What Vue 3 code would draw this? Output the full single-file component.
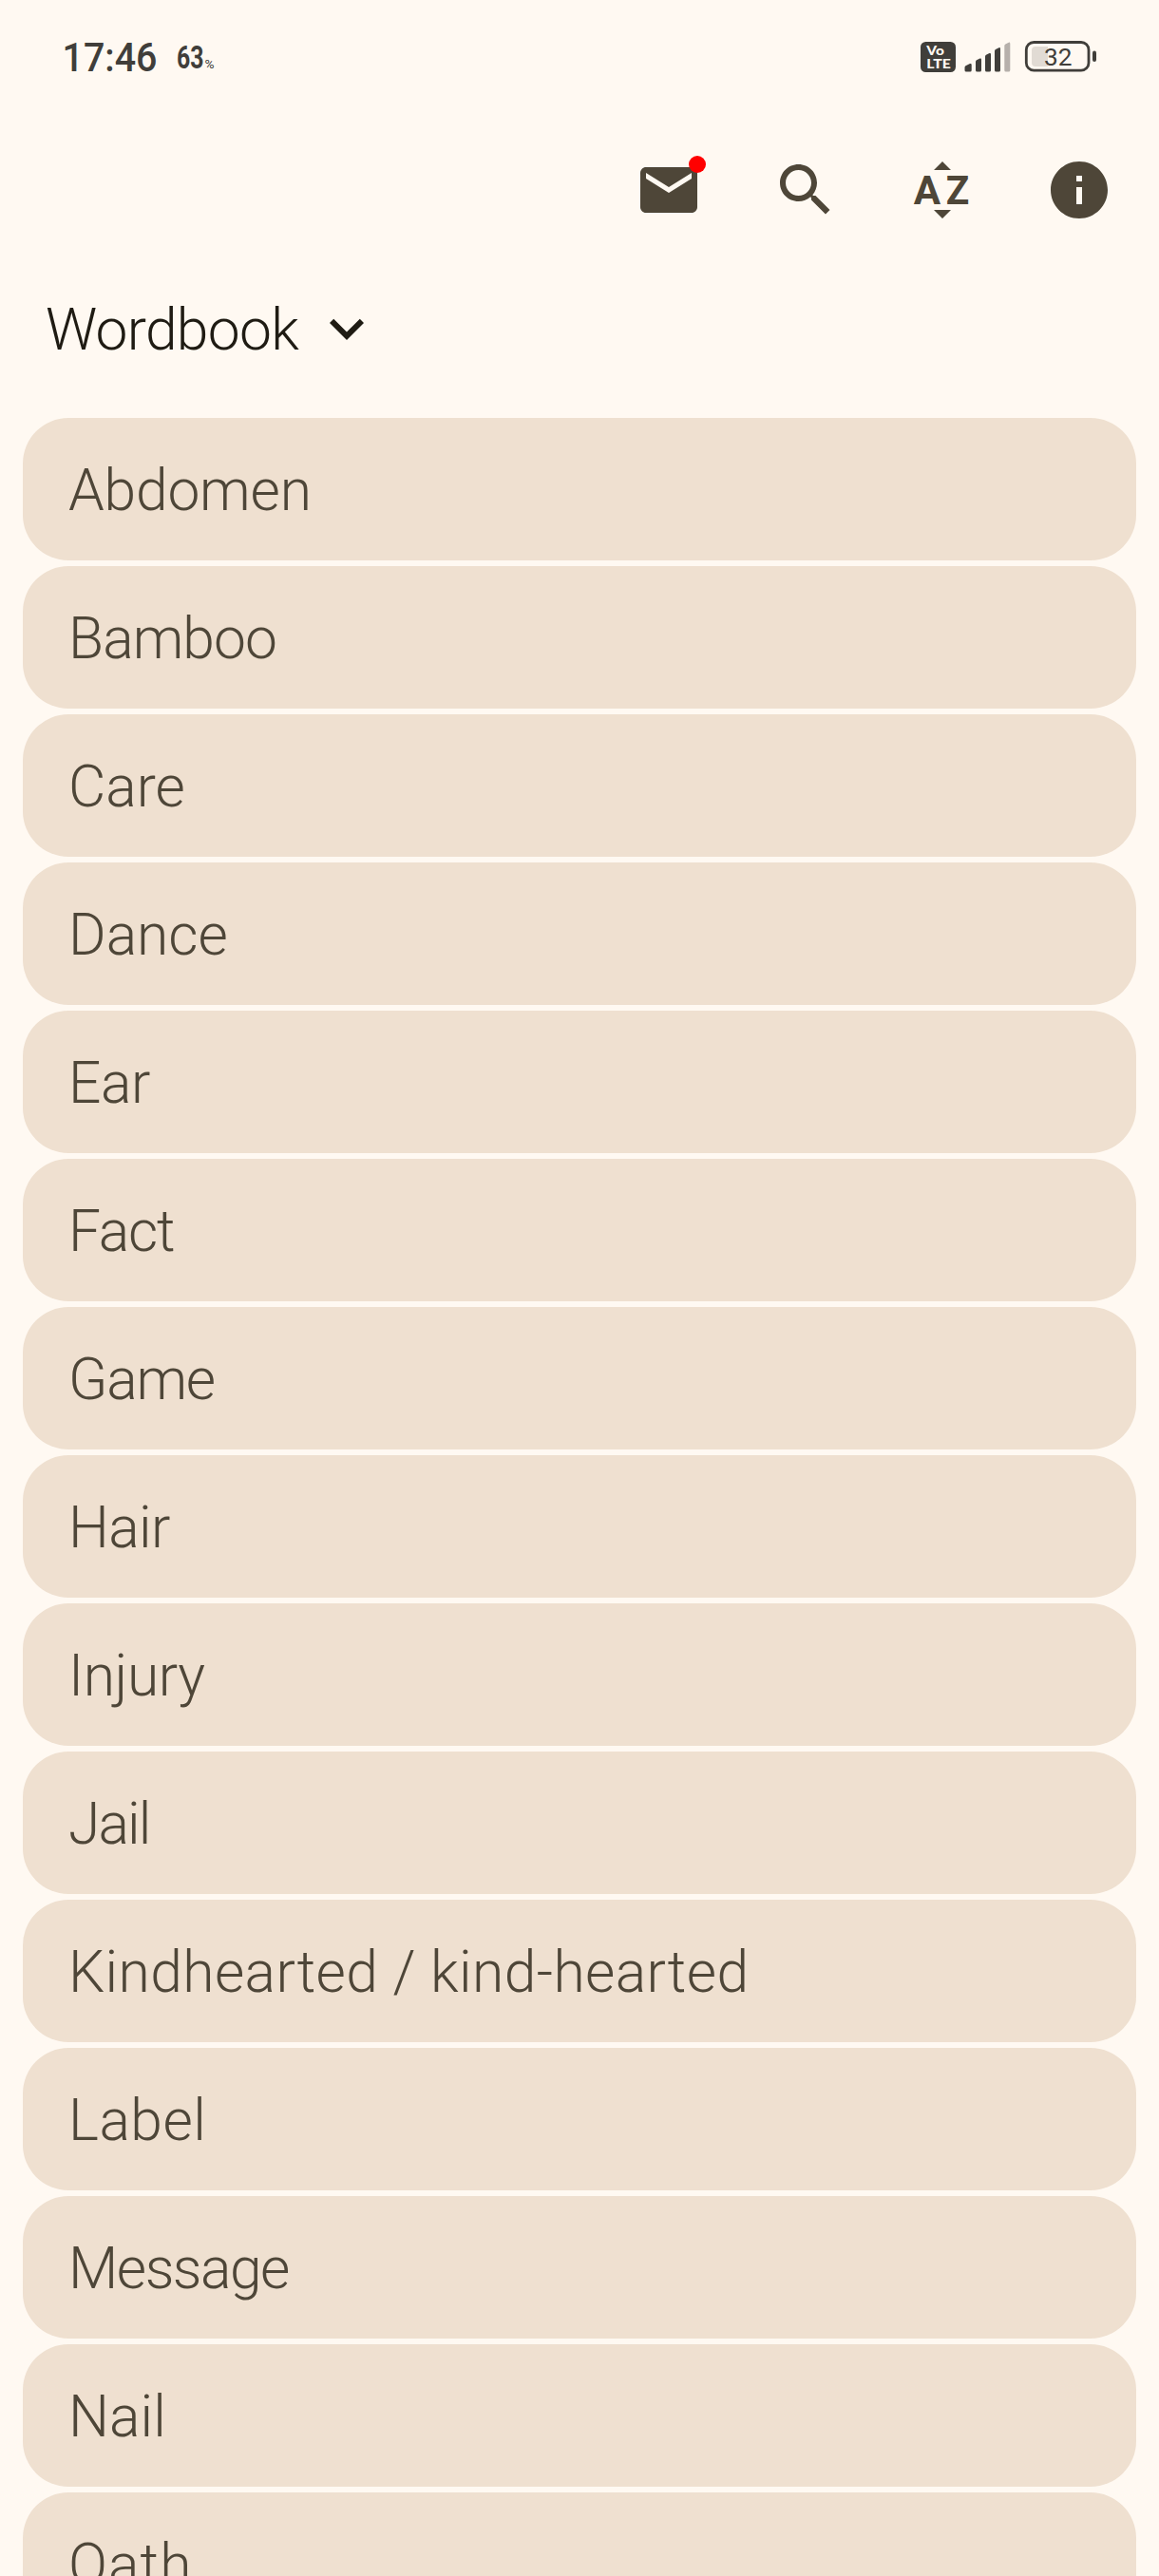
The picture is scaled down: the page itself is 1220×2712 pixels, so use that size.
<script setup>
// Each entry carries its own tracking, in pixels
const entries = [
  { word: 'Abdomen', tracking: -0.2 },
  { word: 'Bamboo', tracking: -0.94 },
  { word: 'Care', tracking: 0 },
  { word: 'Dance', tracking: 0 },
  { word: 'Ear', tracking: -0.45 },
  { word: 'Fact', tracking: -1.2 },
  { word: 'Game', tracking: -1.2 },
  { word: 'Hair', tracking: -0.6 },
  { word: 'Injury', tracking: -0.4 },
  { word: 'Jail', tracking: -1.9 },
  { word: 'Kindhearted / kind-hearted', tracking: 0.4 },
  { word: 'Label', tracking: 0.5 },
  { word: 'Message', tracking: -1.5 },
  { word: 'Nail', tracking: 0.1 },
  { word: 'Oath', tracking: 1.1 },
]
</script>

<template>
  <div class="screen">
    <header class="status">
      <svg class="clock" width="170" height="60" viewBox="60 30 170 60">
        <text x="65.500" y="75.300" font-size="42.400" font-weight="500" textLength="100" lengthAdjust="spacingAndGlyphs">17:46</text>
        <text x="186" y="72" font-size="33.500" font-weight="700" textLength="28.500" lengthAdjust="spacingAndGlyphs">63</text>
        <text x="215.500" y="72" font-size="12.500" font-weight="400" textLength="10" lengthAdjust="spacingAndGlyphs">%</text>
      </svg>
      <svg class="indicators" width="190" height="60" viewBox="966 30 190 60">
        <rect x="969" y="44" width="37" height="32" rx="5.500" fill="#403e3a" />
        <text class="badge" x="975.300" y="58.300" font-size="13" textLength="18.500" lengthAdjust="spacingAndGlyphs">Vo</text>
        <text class="badge" x="975.300" y="71.500" font-size="14" textLength="25.500" lengthAdjust="spacingAndGlyphs">LTE</text>
        <g fill="#403e3a">
          <path d="M1015.500 71q0-1.200 1-1.800l4.500-2.200q1.700-.5 1.700 1.200V74q0 1.600-1.600 1.600h-4q-1.600 0-1.600-1.600z" />
          <path d="M1027 65q0-1.200 1-1.700l3.500-1.800q1.500-.5 1.500 1.200V74q0 1.600-1.600 1.600h-2.800q-1.600 0-1.600-1.600z" />
          <path d="M1037 59.500q0-1.200 1-1.700l3.500-1.800q1.500-.5 1.500 1.200V74q0 1.600-1.600 1.600h-2.800q-1.600 0-1.600-1.600z" />
          <path d="M1047 53.700q0-1.200 1-1.700l3.500-1.800q1.500-.5 1.500 1.200V74q0 1.600-1.600 1.600h-2.800q-1.600 0-1.600-1.600z" />
          <path fill="#b6b0ab" d="M1057.300 48.200q0-1.200 1-1.700l3.500-1.800q1.500-.5 1.500 1.200V74q0 1.600-1.600 1.600h-2.800q-1.600 0-1.600-1.600z" />
        </g>
        <rect x="1080.300" y="44.500" width="65.700" height="29.700" rx="8" fill="none" stroke="#403e3a" stroke-width="2.800" />
        <path fill="#e1dbd4" d="M1090 49h13v21h-13q-4 0-4-4V53q0-4 4-4z" />
        <rect x="1150" y="53.500" width="4" height="11.500" rx="2" fill="#403e3a" />
        <text x="1099" y="69" font-size="26.500" font-weight="400" textLength="29.500" lengthAdjust="spacingAndGlyphs">32</text>
      </svg>
    </header>

    <nav class="toolbar">
      <div class="mail">
        <svg class="icon" viewBox="0 0 24 24"><path d="M20 4H4c-1.100 0-1.990.9-1.990 2L2 18c0 1.100.9 2 2 2h16c1.100 0 2-.9 2-2V6c0-1.100-.9-2-2-2zm0 4l-8 5-8-5V6l8 5 8-5v2z" /></svg>
        <span class="dot"></span>
      </div>
      <svg class="icon" viewBox="0 0 24 24"><path d="M15.500 14h-.79l-.28-.27C15.410 12.590 16 11.110 16 9.500 16 5.910 13.090 3 9.500 3S3 5.910 3 9.500 5.910 16 9.500 16c1.610 0 3.090-.59 4.230-1.570l.27.28v.79l5 4.990L20.490 19l-4.990-5zm-6 0C7.010 14 5 11.990 5 9.500S7.010 5 9.500 5 14 7.010 14 9.500 11.990 14 9.500 14z" /></svg>
      <svg class="icon" viewBox="0 0 72 72">
        <path d="M27 15l9-9 9 9zM27 57h18l-9 9z" />
        <text x="5.800" y="51" font-size="42.200" font-weight="700">A</text>
        <text x="39.800" y="51" font-size="42.200" font-weight="700" textLength="24.500" lengthAdjust="spacingAndGlyphs">Z</text>
      </svg>
      <svg class="icon" viewBox="0 0 24 24"><path d="M12 2C6.480 2 2 6.480 2 12s4.480 10 10 10 10-4.480 10-10S17.520 2 12 2zm1 15h-2v-6h2v6zm0-8h-2V7h2v2z" /></svg>
    </nav>

    <div class="heading">
      <h1 class="title">Wordbook</h1>
      <svg class="chevron" viewBox="0 0 24 24"><path d="M7.410 8.590L12 13.170l4.590-4.580L18 10l-6 6-6-6z" /></svg>
    </div>

    <ul class="list">
      <li v-for="e in entries" :key="e.word" class="row" :style="{ letterSpacing: e.tracking + 'px' }">{{ e.word }}</li>
    </ul>
  </div>
</template>

<style scoped>
.screen {
  width: 1220px;
  height: 2712px;
  overflow: hidden;
  background: #fff9f2;
  color: #4e4638;
  font-family: Roboto, "Noto Sans", sans-serif;
}
.status {
  display: flex;
  justify-content: space-between;
  box-sizing: border-box;
  height: 164px;
  padding: 30px 64px 0 60px;
  fill: #403e3a;
}
.badge {
  fill: #fff9f2;
  font-family: Lato, sans-serif;
  font-weight: 900;
}
.toolbar {
  display: flex;
  justify-content: flex-end;
  gap: 72px;
  height: 72px;
  padding-right: 48px;
}
.icon {
  display: block;
  width: 72px;
  height: 72px;
  fill: #4e4638;
}
.mail {
  position: relative;
}
.dot {
  position: absolute;
  top: 0;
  right: -3px;
  width: 18px;
  height: 18px;
  border-radius: 50%;
  background: #f00;
}
.heading {
  display: flex;
  height: 72px;
  margin-top: 74px;
  padding-left: 48px;
}
.title {
  box-sizing: border-box;
  width: 281px;
  height: 72px;
  margin: 0;
  padding-top: 2px;
  color: #1f1b13;
  font-size: 60.5px;
  font-weight: 330;
  line-height: 72px;
  letter-spacing: -0.7px;
}
.chevron {
  width: 72px;
  height: 72px;
  fill: #1f1b13;
}
.list {
  display: flex;
  flex-direction: column;
  gap: 6px;
  margin: 58px 24px 0;
  padding: 0;
  list-style: none;
}
.row {
  box-sizing: border-box;
  flex: none;
  height: 150px;
  padding: 2px 48px 0;
  border-radius: 48px;
  background: #efe0d0;
  font-size: 60.5px;
  font-weight: 330;
  line-height: 150px;
  white-space: nowrap;
}
</style>
